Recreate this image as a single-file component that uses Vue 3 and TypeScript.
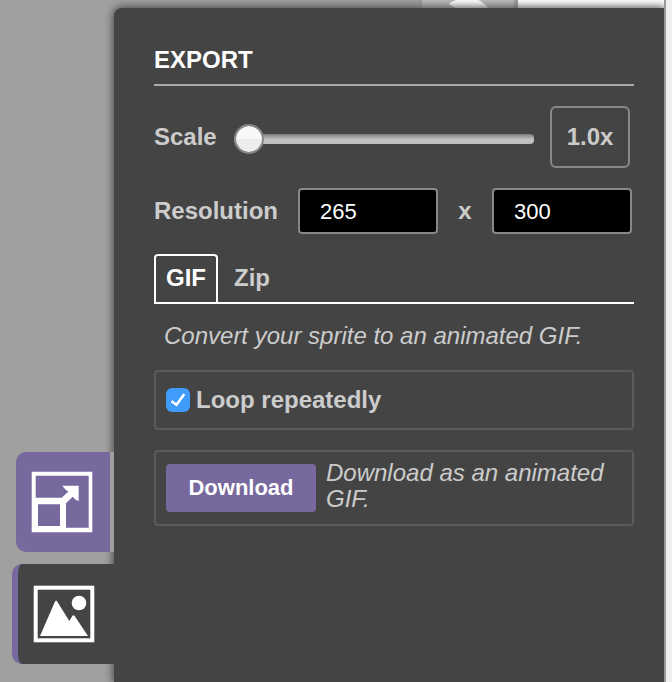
<script setup lang="ts">
import { computed, ref } from 'vue'

type Format = 'GIF' | 'Zip'

const BASE_WIDTH = 265
const BASE_HEIGHT = 300

const formats: Format[] = ['GIF', 'Zip']
const format = ref<Format>('GIF')
const scale = ref(1)
const loop = ref(true)

const scaleLabel = computed(() => `${Number(scale.value).toFixed(1)}x`)
const width = computed({
  get: () => Math.round(BASE_WIDTH * scale.value),
  set: (value: number) => { scale.value = Number(value) / BASE_WIDTH },
})
const height = computed({
  get: () => Math.round(BASE_HEIGHT * scale.value),
  set: (value: number) => { scale.value = Number(value) / BASE_HEIGHT },
})
</script>

<template>
  <div class="app">
    <nav class="drawer-tabs">
      <button class="drawer-tab" type="button" aria-label="Resize">
        <svg class="drawer-icon" viewBox="0 0 62 62" aria-hidden="true">
          <path
            d="M.7 .7H61.300V61.300H.7Z M4.700 4.700V26.700H30.700L37.500 20.500L35 19.300L31.300 14.700H47.700V30L45 29L41.700 25.700L35 32.300V56.700H57.700V4.700Z M7 33.300V55H29V33.300Z"
            fill="#fff"
            fill-rule="evenodd"
          />
        </svg>
      </button>
      <button class="drawer-tab selected" type="button" aria-label="Export">
        <svg class="drawer-icon" viewBox="0 0 62 62" aria-hidden="true">
          <rect x="2.700" y="4.700" width="56.600" height="52.600" fill="none" stroke="#fff" stroke-width="4" />
          <path d="M7 53L21.800 19Q23 16 24.500 19L36.300 38L39 33.500Q40.300 31 42 33.500L55 53Z" fill="#fff" />
          <circle cx="46" cy="20" r="7.300" fill="#fff" />
        </svg>
      </button>
    </nav>

    <div class="main">
      <div class="canvas-strip">
        <div class="preview-tile">
          <svg class="preview-shape" viewBox="0 0 92 8" aria-hidden="true">
            <path d="M27 4C30 1 34 0 38 -1H54C59 1 63 4 66 8H33Z" fill="#fff" />
          </svg>
        </div>
        <div class="preview-page"></div>
      </div>

      <section class="panel">
        <h1 class="title">EXPORT</h1>

        <div class="row">
          <label class="scale-name" for="scale">Scale</label>
          <input id="scale" v-model.number="scale" class="slider" type="range" min="1" max="32" step="0.1" />
          <output class="scale-value" for="scale">{{ scaleLabel }}</output>
        </div>

        <div class="row">
          <label class="resolution-name" for="width">Resolution</label>
          <input id="width" v-model.lazy.number="width" class="size" type="text" />
          <label class="times" for="height">x</label>
          <input id="height" v-model.lazy.number="height" class="size" type="text" />
        </div>

        <div class="formats" role="tablist">
          <button
            v-for="name in formats"
            :key="name"
            class="format"
            :class="{ active: name === format }"
            type="button"
            role="tab"
            :aria-selected="name === format"
            @click="format = name"
          >{{ name }}</button>
        </div>

        <p class="hint">Convert your sprite to an animated GIF.</p>

        <div class="box loop-box">
          <input id="loop" v-model="loop" class="check" type="checkbox" />
          <label for="loop">Loop repeatedly</label>
        </div>

        <div class="box download-box">
          <button class="download" type="button">Download</button>
          <span class="note">Download as an animated GIF.</span>
        </div>
      </section>
    </div>
    <div class="edge"></div>
  </div>
</template>

<style>
body {
  margin: 0;
  background: #a0a0a0;
}
</style>

<style scoped>
.app,
.app * {
  box-sizing: border-box;
}

.app {
  display: flex;
  min-height: 100vh;
  overflow: hidden;
  background: #a0a0a0;
  color: #ccc;
  font: bold 24px/26px "Liberation Sans", Arial, sans-serif;
}

button,
input {
  margin: 0;
  font: inherit;
}

.drawer-tabs {
  position: relative;
  z-index: 2;
  display: flex;
  flex: none;
  flex-direction: column;
  align-items: flex-end;
  justify-content: flex-end;
  gap: 12px;
  width: 114px;
  padding-bottom: 18px;
}

.drawer-tab {
  display: flex;
  align-items: center;
  width: 98px;
  height: 100px;
  padding: 0 0 0 15px;
  border: 0;
  border-right: 4px solid #a0a0a0;
  border-radius: 10px 0 0 10px;
  background: #77689d;
}

.drawer-tab.selected {
  width: 102px;
  border-right: 0;
  border-left: 6px solid #77689d;
  background: #444;
}

.drawer-icon {
  width: 62px;
  height: 62px;
}

.main {
  display: flex;
  flex: 1;
  flex-direction: column;
  min-width: 0;
}

.canvas-strip {
  display: flex;
  justify-content: flex-end;
  height: 8px;
}

.preview-tile {
  width: 100px;
  border: solid #a0a0a0;
  border-width: 0 4px;
  background: #bababa;
}

.preview-shape {
  display: block;
  width: 92px;
  height: 8px;
}

.preview-page {
  width: 146px;
  background: #fff;
}

.panel {
  position: relative;
  z-index: 1;
  flex: 1;
  padding: 39px 30px 38px 40px;
  border-radius: 8px 0 0 0;
  background: #444;
  box-shadow: 0 0 8px 1px #444;
}

.title {
  margin: 0 0 20px;
  padding-bottom: 11px;
  border-bottom: 2px solid #aaa;
  color: #fff;
  font: inherit;
}

.row {
  display: flex;
  align-items: center;
  margin-bottom: 20px;
}

.scale-name {
  width: 80px;
}

.slider {
  flex: 1;
  min-width: 0;
  height: 30px;
  margin-top: 4px;
  background: transparent;
  appearance: none;
}

.slider::-webkit-slider-runnable-track {
  height: 10px;
  border-radius: 4px;
  background: linear-gradient(#7c7c7c, #b0b0b0 40%, #c4c4c4 60%, #bcbcbc);
}

.slider::-webkit-slider-thumb {
  box-sizing: border-box;
  width: 30px;
  height: 30px;
  margin-top: -10px;
  border: 2px solid #888;
  border-radius: 50%;
  background: linear-gradient(#f8f8f8 50%, #ebebeb 50%, #eee) padding-box;
  appearance: none;
}

.scale-value {
  width: 80px;
  margin: 0 4px 0 16px;
  padding: 16px 0;
  border: 2px solid #888;
  border-radius: 6px;
  text-align: center;
}

.resolution-name {
  width: 144px;
}

.size {
  flex: 1;
  min-width: 0;
  height: 46px;
  padding: 2px 20px 0;
  border: 2px solid #888;
  border-radius: 4px;
  background: #000;
  color: #fff;
  font-size: 22px;
  font-weight: normal;
}

.size:last-child {
  margin-right: 2px;
}

.times {
  width: 54px;
  text-align: center;
}

.formats {
  display: flex;
  gap: 4px;
  border-bottom: 2px solid #fff;
}

.format {
  height: 48px;
  padding: 0 10px 2px;
  border: 2px solid transparent;
  border-bottom: 0;
  border-radius: 4px 4px 0 0;
  background: transparent;
  color: #ccc;
}

.format.active {
  border-color: #fff;
  color: #fff;
}

.hint {
  margin: 0;
  padding: 19px 10px 21px;
  font-style: italic;
  font-weight: normal;
}

.box {
  display: flex;
  margin-bottom: 20px;
  border: 2px solid #5c5c5c;
  border-radius: 4px;
}

.loop-box {
  align-items: center;
  gap: 6px;
  padding: 15px 10px;
}

.check {
  display: flex;
  justify-content: center;
  width: 24px;
  height: 24px;
  border-radius: 6px;
  background: #fff;
  appearance: none;
}

.check:checked {
  background: #3f9bfc;
}

.check:checked::before {
  box-sizing: border-box;
  width: 8px;
  height: 15px;
  margin-top: 3px;
  border: solid #fff;
  border-width: 0 3px 3px 0;
  border-radius: 1px;
  content: "";
  transform: rotate(36deg);
}

.download-box {
  align-items: flex-start;
  gap: 10px;
  padding: 8px 10px 12px;
}

.download {
  flex: none;
  width: 150px;
  height: 48px;
  margin-top: 4px;
  padding: 0;
  border: 0;
  border-radius: 4px;
  background: #77689d;
  color: #fff;
  font-size: 22px;
}

.note {
  font-style: italic;
  font-weight: normal;
}

.edge {
  position: relative;
  z-index: 2;
  flex: none;
  width: 8px;
  border-left: 2px solid #95999d;
  background: #f0f0f0;
}
</style>
